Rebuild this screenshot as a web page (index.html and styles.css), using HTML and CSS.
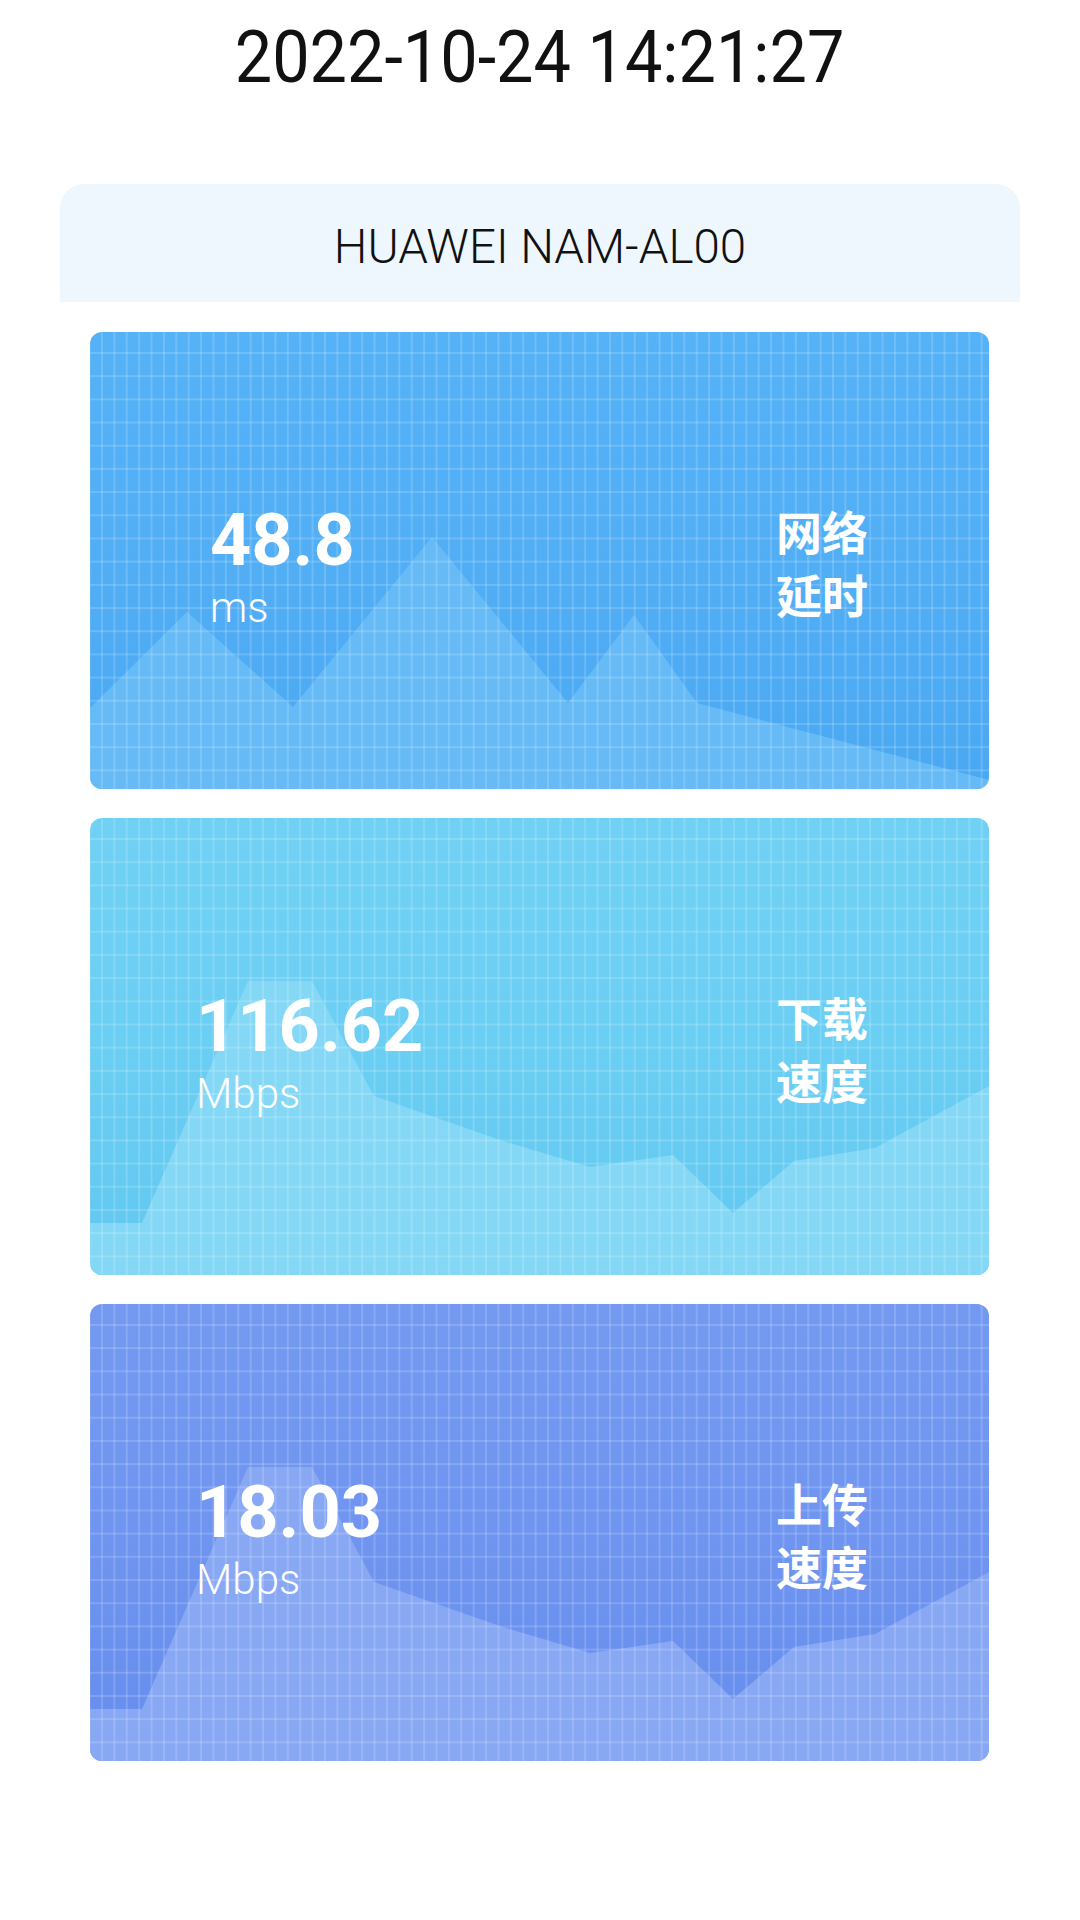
FILE: index.html
```html
<!DOCTYPE html>
<html lang="zh-CN">
<head>
<meta charset="utf-8">
<title>测速结果</title>
<link rel="stylesheet" href="styles.css">
</head>
<body>
<div class="page">
  <div class="time"><span class="time-text">2022-10-24 14:21:27</span></div>
  <div class="device">HUAWEI NAM-AL00</div>
  <div class="cards">
    <div class="card card--ping">
      <svg class="chart" viewBox="0 0 899 457" preserveAspectRatio="none">
        <polygon class="hill" points="0,376 97,280 203,375 342,205 478,371 544,283 607,371 899,448 899,457 0,457"/>
      </svg>
      <div class="value"><div class="num">48.8</div><div class="unit">ms</div></div>
      <div class="label">网络<br>延时</div>
    </div>
    <div class="card card--down">
      <svg class="chart" viewBox="0 0 899 457" preserveAspectRatio="none">
        <polygon class="hill" points="0,405 52,405 158,163 222,163 284,278 410,322 500,349 583,337 643,395 704,343 785,330 899,268 899,457 0,457"/>
      </svg>
      <div class="value"><div class="num">116.62</div><div class="unit">Mbps</div></div>
      <div class="label">下载<br>速度</div>
    </div>
    <div class="card card--up">
      <svg class="chart" viewBox="0 0 899 457" preserveAspectRatio="none">
        <polygon class="hill" points="0,405 52,405 158,163 222,163 284,278 410,322 500,349 583,337 643,395 704,343 785,330 899,268 899,457 0,457"/>
      </svg>
      <div class="value"><div class="num">18.03</div><div class="unit">Mbps</div></div>
      <div class="label">上传<br>速度</div>
    </div>
  </div>
</div>
</body>
</html>
```
FILE: styles.css
```css
html, body {
  margin: 0;
  padding: 0;
  background: #ffffff;
}
body {
  font-family: Roboto, "Noto Sans CJK SC", sans-serif;
  color: #111111;
}
.page {
  width: 1080px;
  min-height: 1920px;
}
.time {
  padding-top: 22px;
  height: 72px;
  line-height: 72px;
  text-align: center;
  font-size: 72px;
  font-weight: 400;
}
.time-text {
  display: inline-block;
  transform: scaleX(0.925);
}
.device {
  margin: 90px 60px 0;
  height: 118px;
  box-sizing: border-box;
  padding-top: 8px;
  line-height: 110px;
  text-align: center;
  font-size: 47.5px;
  font-weight: 300;
  background: #eef7fe;
  border-radius: 24px 24px 0 0;
}
.cards {
  margin: 30px 91px 0 90px;
  display: flex;
  flex-direction: column;
  gap: 29px;
}
.card {
  position: relative;
  height: 457px;
  border-radius: 12px;
  overflow: hidden;
  display: flex;
  justify-content: space-between;
  align-items: flex-start;
  box-sizing: border-box;
  padding: 167px 121px 0 106px;
  color: #ffffff;
}
.card::after {
  content: "";
  position: absolute;
  inset: 0;
  background-image:
    linear-gradient(to right, rgba(255,255,255,0.16) 1.5px, transparent 1.5px),
    linear-gradient(to bottom, rgba(255,255,255,0.16) 1.5px, transparent 1.5px);
  background-size: 12.4px 23.2px;
  background-position: 11px 20px;
  pointer-events: none;
}
.chart {
  position: absolute;
  left: 0;
  top: 0;
  width: 100%;
  height: 100%;
}
.card--ping {
  padding-left: 120px;
  background: linear-gradient(to bottom, #56b2f7 0%, #51aef5 55%, #4aa8f2 100%);
}
.card--ping .hill { fill: #66bbf7; }
.card--down {
  background: linear-gradient(to bottom, #70d1f4 0%, #6bcef3 50%, #62c8f0 100%);
}
.card--down .hill { fill: #84d8f6; }
.card--up {
  background: linear-gradient(to bottom, #7399f0 0%, #6f95f0 50%, #678dee 100%);
}
.card--up .hill { fill: #88a8f4; }
.value, .label {
  position: relative;
  z-index: 1;
}
.num {
  font-family: Roboto, sans-serif;
  font-size: 72px;
  line-height: 84px;
  font-weight: 700;
}
.unit {
  font-family: Roboto, sans-serif;
  font-size: 42px;
  line-height: 50px;
  font-weight: 300;
}
.label {
  font-family: "Noto Sans CJK SC", sans-serif;
  font-size: 46px;
  line-height: 63px;
  font-weight: 700;
}
```
